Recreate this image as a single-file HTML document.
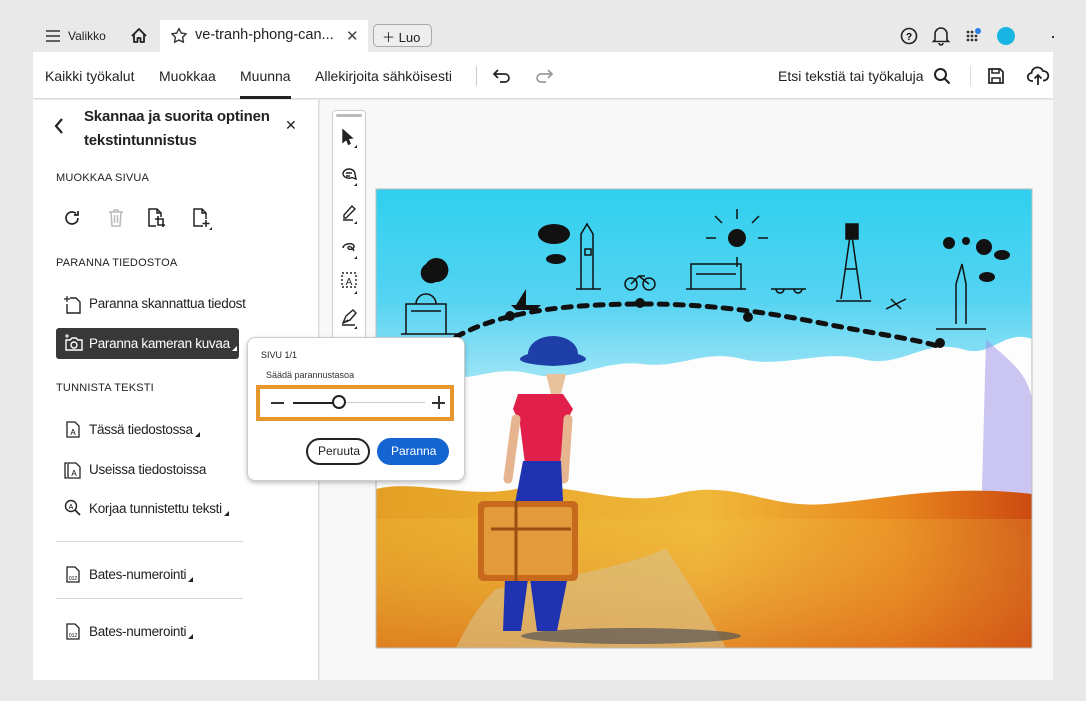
<!DOCTYPE html>
<html><head><meta charset="utf-8"><style>
*{box-sizing:border-box;margin:0;padding:0}
body{width:1086px;height:701px;background:#e9e9e9;font-family:"Liberation Sans",sans-serif;color:#222;position:relative;overflow:hidden}
.abs{position:absolute}
.tabbar{left:33px;top:20px;width:1020px;height:32px;background:#e9e9e9}
.tab{left:160px;top:20px;width:208px;height:32px;background:#fff}
.tool{left:33px;top:52px;width:1020px;height:47px;background:#fff;border-bottom:1px solid #ddd}
.t{position:absolute;font-size:14px;color:#222;white-space:nowrap}
.left{left:33px;top:100px;width:286px;height:580px;background:#fff;border-right:1px solid #ddd}
.canvas{left:320px;top:100px;width:733px;height:580px;background:#f8f8f8}
.sec{position:absolute;left:56px;font-size:11px;letter-spacing:.2px;color:#222}
.item{position:absolute;left:89px;font-size:13.5px;letter-spacing:-.3px;color:#222;white-space:nowrap}
.car{display:inline-block;width:0;height:0;border-left:5px solid transparent;border-bottom:5px solid #222;vertical-align:-3px;margin-left:2px}
svg{position:absolute;overflow:visible}
</style></head><body>
<div class="abs tabbar"></div>
<div class="abs tab"></div>
<svg style="left:45px;top:29px" width="16" height="14"><path d="M1 2h14M1 7h14M1 12h14" stroke="#333" stroke-width="1.6"/></svg>
<div class="t" style="left:68px;top:29px;font-size:12px">Valikko</div>
<svg style="left:130px;top:27px" width="18" height="17"><path d="M2 9L9 2l7 7M4 7.5V15h3.5v-4h3v4H14V7.5" fill="none" stroke="#222" stroke-width="1.8" stroke-linejoin="round"/></svg>
<svg style="left:170px;top:27px" width="18" height="17"><path d="M9 1.5l2.2 4.6 5 .7-3.6 3.5.9 5L9 13l-4.5 2.3.9-5L1.8 6.8l5-.7z" fill="none" stroke="#333" stroke-width="1.4" stroke-linejoin="round"/></svg>
<div class="t" style="left:195px;top:27px;font-size:14.5px">ve-tranh-phong-can...</div>
<div class="t" style="left:346px;top:27px;font-size:15px;color:#444">✕</div>
<div class="abs" style="left:373px;top:24px;width:59px;height:23px;border:1px solid #aaa;border-radius:5px;background:#eee"></div>
<div class="t" style="left:382px;top:27px;font-size:13px">＋ Luo</div>
<svg style="left:900px;top:27px" width="18" height="18"><circle cx="9" cy="9" r="7.5" fill="none" stroke="#222" stroke-width="1.6"/><text x="9" y="13" font-size="10" text-anchor="middle" font-weight="bold" font-family="Liberation Sans">?</text></svg>
<svg style="left:932px;top:26px" width="18" height="20"><path d="M3 14V8a6 6 0 0112 0v6l1.5 1.5h-15zM7 17a2 2 0 004 0" fill="none" stroke="#222" stroke-width="1.6"/></svg>
<svg style="left:966px;top:28px" width="18" height="16"><g fill="#333"><circle cx="2" cy="4" r="1.4"/><circle cx="6" cy="4" r="1.4"/><circle cx="2" cy="8" r="1.4"/><circle cx="6" cy="8" r="1.4"/><circle cx="10" cy="8" r="1.4"/><circle cx="2" cy="12" r="1.4"/><circle cx="6" cy="12" r="1.4"/><circle cx="10" cy="12" r="1.4"/></g><circle cx="12" cy="3" r="3" fill="#2a7de1"/></svg>
<div class="abs" style="left:997px;top:27px;width:18px;height:18px;border-radius:50%;background:#19b6e3"></div>
<div class="abs" style="left:1052px;top:36px;width:2px;height:2px;background:#333"></div>

<div class="abs tool"></div>
<div class="t" style="left:45px;top:68px">Kaikki työkalut</div>
<div class="t" style="left:159px;top:68px">Muokkaa</div>
<div class="t" style="left:240px;top:68px">Muunna</div>
<div class="abs" style="left:240px;top:96px;width:51px;height:3px;background:#222"></div>
<div class="t" style="left:315px;top:68px">Allekirjoita sähköisesti</div>
<div class="abs" style="left:476px;top:66px;width:1px;height:20px;background:#ccc"></div>
<svg style="left:492px;top:68px" width="20" height="16"><path d="M6 2L2 6l4 4M2 6h11a4 4 0 010 8H8" fill="none" stroke="#222" stroke-width="1.7"/></svg>
<svg style="left:534px;top:68px" width="20" height="16"><path d="M14 2l4 4-4 4M18 6H7a4 4 0 000 8h5" fill="none" stroke="#999" stroke-width="1.7"/></svg>
<div class="t" style="left:778px;top:68px">Etsi tekstiä tai työkaluja</div>
<svg style="left:933px;top:67px" width="18" height="18"><circle cx="7.5" cy="7.5" r="5.5" fill="none" stroke="#222" stroke-width="2"/><path d="M11.5 11.5l5 5" stroke="#222" stroke-width="2.2"/></svg>
<div class="abs" style="left:970px;top:66px;width:1px;height:20px;background:#ddd"></div>
<svg style="left:987px;top:67px" width="18" height="18"><path d="M2 2h11l3 3v11H2z" fill="none" stroke="#222" stroke-width="1.7"/><path d="M5 2v4h7V2M5 16v-5h8v5" fill="none" stroke="#222" stroke-width="1.5"/></svg>
<svg style="left:1027px;top:66px" width="22" height="20"><path d="M6 15H5a4 4 0 01-.5-8A6 6 0 0116 5a4.5 4.5 0 011 9.5h-1" fill="none" stroke="#222" stroke-width="1.8"/><path d="M11 19V9M7.5 12.5L11 9l3.5 3.5" fill="none" stroke="#222" stroke-width="1.8"/></svg>

<div class="abs left"></div>
<svg style="left:53px;top:117px" width="12" height="18"><path d="M9 2L3 9l6 7" fill="none" stroke="#222" stroke-width="2.2"/></svg>
<div class="t" style="left:84px;top:105px;font-size:15px;letter-spacing:-.2px;font-weight:bold;line-height:24px">Skannaa ja suorita optinen<br>tekstintunnistus</div>
<div class="t" style="left:285px;top:117px;font-size:14px">✕</div>
<div class="sec" style="top:172px">MUOKKAA SIVUA</div>
<svg style="left:63px;top:209px" width="18" height="18"><path d="M15 9a6 6 0 11-2-4.5M15 2v4h-4" fill="none" stroke="#222" stroke-width="1.7"/></svg>
<svg style="left:107px;top:208px" width="18" height="20"><path d="M2 4h14M7 4V2h4v2M4 4l1 14h8l1-14M7.5 7v8M10.5 7v8" fill="none" stroke="#bbb" stroke-width="1.5"/></svg>
<svg style="left:147px;top:207px" width="20" height="22"><path d="M9 19H2V2h8l4 4v4M10 2v4h4" fill="none" stroke="#222" stroke-width="1.5"/><path d="M11 9v9h7M8 12h8v8" fill="none" stroke="#222" stroke-width="1.6"/></svg>
<svg style="left:192px;top:207px" width="22" height="24"><path d="M11 19H2V2h8l4 4v6M10 2v4h4M14 13v7M10.5 16.5h7" fill="none" stroke="#222" stroke-width="1.5"/><path d="M20 20v3h-3z" fill="#222"/></svg>
<div class="sec" style="top:257px">PARANNA TIEDOSTOA</div>
<svg style="left:64px;top:295px" width="18" height="20"><path d="M6 3h6l4 4v11H3V9" fill="none" stroke="#222" stroke-width="1.4"/><path d="M3 1v6M0 4h6" stroke="#222" stroke-width="1.2"/></svg>
<div class="item" style="top:296px">Paranna skannattua tiedost</div>
<div class="abs" style="left:56px;top:328px;width:183px;height:31px;background:#383838;border-radius:3px"></div>
<svg style="left:64px;top:334px" width="20" height="18"><path d="M2 6h4l2-2h4l2 2h4v10H2z" fill="none" stroke="#fff" stroke-width="1.4"/><circle cx="10" cy="11" r="3" fill="none" stroke="#fff" stroke-width="1.4"/><path d="M3 0v4M1 2h4" stroke="#fff" stroke-width="1.1"/></svg>
<div class="item" style="top:336px;color:#fff">Paranna kameran kuvaa<span class="car" style="border-bottom-color:#fff"></span></div>
<div class="sec" style="top:382px">TUNNISTA TEKSTI</div>
<svg style="left:66px;top:421px" width="14" height="17"><path d="M1 1h8l4 4v11H1z" fill="none" stroke="#222" stroke-width="1.3"/><text x="7" y="14" font-size="8" text-anchor="middle" font-family="Liberation Sans">A</text></svg>
<div class="item" style="top:422px">Tässä tiedostossa<span class="car"></span></div>
<svg style="left:64px;top:461px" width="18" height="18"><path d="M3 2H1v15h2" fill="none" stroke="#222" stroke-width="1.3"/><path d="M4 2h8l4 4v11H4z" fill="none" stroke="#222" stroke-width="1.3"/><text x="10" y="15" font-size="8" text-anchor="middle" font-family="Liberation Sans">A</text></svg>
<div class="item" style="top:462px">Useissa tiedostoissa</div>
<svg style="left:64px;top:499px" width="18" height="18"><circle cx="7" cy="7" r="5.5" fill="none" stroke="#222" stroke-width="1.4"/><path d="M11 11l5 5" stroke="#222" stroke-width="1.6"/><text x="7" y="10" font-size="7" text-anchor="middle" font-family="Liberation Sans">A</text></svg>
<div class="item" style="top:501px">Korjaa tunnistettu teksti<span class="car"></span></div>
<div class="abs" style="left:56px;top:541px;width:187px;height:1px;background:#d5d5d5"></div>
<svg style="left:66px;top:566px" width="14" height="17"><path d="M1 1h8l4 4v11H1z" fill="none" stroke="#222" stroke-width="1.3"/><text x="7" y="14" font-size="5" text-anchor="middle" font-family="Liberation Sans">012</text></svg>
<div class="item" style="top:567px">Bates-numerointi<span class="car"></span></div>
<div class="abs" style="left:56px;top:598px;width:187px;height:1px;background:#d5d5d5"></div>
<svg style="left:66px;top:623px" width="14" height="17"><path d="M1 1h8l4 4v11H1z" fill="none" stroke="#222" stroke-width="1.3"/><text x="7" y="14" font-size="5" text-anchor="middle" font-family="Liberation Sans">012</text></svg>
<div class="item" style="top:624px">Bates-numerointi<span class="car"></span></div>

<div class="abs canvas"></div>
<div class="abs" style="left:332px;top:110px;width:34px;height:230px;background:#fff;border:1px solid #ccc;border-radius:4px"></div>
<div class="abs" style="left:336px;top:114px;width:26px;height:3px;background:#bbb;border-radius:2px"></div>
<svg style="left:340px;top:128px" width="20" height="210" fill="none" stroke="#222" stroke-width="1.4">
<path d="M3 2l9 8-4 .5 2 5-1.5.7-2-5L3 14z" fill="#222"/>
<path d="M3 46a6 5 0 1112 0l1 5-4-1.5A6 5 0 013 46zM6 45h6M6 48h4"/>
<path d="M4 87l8-9 3 3-9 9H4zM3 92h10" />
<path d="M3 120c0-5 12-6 11-1-1 3-6 3-6 1s3-3 6 3"/>
<path d="M2 145h14v14H2z" stroke-dasharray="2 2"/><text x="9" y="157" font-size="10" fill="#222" stroke="none" text-anchor="middle" font-family="Liberation Sans">A</text>
<path d="M3 195l3-7 7-6 3 3-6 7zM3 195l5-3M2 197h13"/>
<g fill="#222" stroke="none"><path d="M17 17v3h-3z"/><path d="M17 55v3h-3z"/><path d="M17 93v3h-3z"/><path d="M17 128v3h-3z"/><path d="M17 163v3h-3z"/><path d="M17 198v3h-3z"/></g>
</svg>

<svg style="left:376px;top:189px" width="656" height="459" viewBox="0 0 656 459">
<defs>
<linearGradient id="sky" x1="0" y1="0" x2="0" y2="1"><stop offset="0" stop-color="#2fd0ee"/><stop offset=".55" stop-color="#55d3f2"/><stop offset="1" stop-color="#a7e6f6"/></linearGradient>
<linearGradient id="fld" x1="0" y1="0" x2="1" y2="0"><stop offset="0" stop-color="#e4a025"/><stop offset=".5" stop-color="#f0b83a"/><stop offset=".8" stop-color="#e8861e"/><stop offset="1" stop-color="#cc4a10"/></linearGradient>
<linearGradient id="fv" x1="0" y1="0" x2="0" y2="1"><stop offset="0" stop-color="#f3c84a" stop-opacity=".2"/><stop offset="1" stop-color="#d8601a" stop-opacity=".5"/></linearGradient>
</defs>
<rect width="656" height="459" fill="#fdfdfd"/>
<path d="M0 0h656v150c-30-10-40 20-70 10-40-10-60 20-100 10s-80 10-120 0-60 10-100 5-70 20-110 10-60 10-80 0-50 20-76 15z" fill="url(#sky)"/>
<path d="M610 150c20 20 40 30 46 60v150c-20-10-40-20-50-60z" fill="#9a8ee6" opacity=".5"/>
<path d="M0 300c40-10 90 10 140 0s100 20 160 5 90 15 150 10 120-20 206-10v154H0z" fill="url(#fld)"/>
<path d="M0 330h656v129H0z" fill="url(#fv)"/>
<path d="M120 400c60-10 120-20 170-40 20 30 40 60 60 99H80c10-20 20-40 40-59z" fill="#d8c28a" opacity=".6"/>
<ellipse cx="255" cy="447" rx="110" ry="8" fill="#555" opacity=".7"/>
<g fill="none" stroke="#111" stroke-width="5" stroke-linecap="round" stroke-dasharray="8 8">
<path d="M80 148C130 120 200 115 270 115S400 125 450 135 540 150 565 158"/></g>
<g fill="#111"><circle cx="134" cy="127" r="5"/><circle cx="264" cy="114" r="5"/><circle cx="372" cy="128" r="5"/><circle cx="564" cy="154" r="5"/>
<ellipse cx="178" cy="45" rx="16" ry="10"/><ellipse cx="180" cy="70" rx="10" ry="5"/><circle cx="361" cy="49" r="9"/>
<path d="M50 75a12 12 0 1110 18 10 10 0 01-10-18z"/>
<circle cx="573" cy="54" r="6"/><circle cx="608" cy="58" r="8"/><circle cx="590" cy="52" r="4"/><ellipse cx="626" cy="66" rx="8" ry="5"/><ellipse cx="611" cy="88" rx="8" ry="5"/>
<path d="M135 116h30l-5 5h-20zM150 100v16h-10z"/></g>
<g fill="none" stroke="#111" stroke-width="1.5">
<path d="M30 145v-30h40v30M40 115a10 10 0 0120 0M25 145h60M35 122h30"/>
<path d="M205 100V45l6-10 6 10v55M200 100h25M209 60h6v6h-6z"/>
<circle cx="255" cy="95" r="6"/><circle cx="273" cy="95" r="6"/><path d="M255 95l8-8 10 8M263 87h6"/>
<path d="M315 100V75h50v25M320 85h40M310 100h60"/>
<path d="M361 30v-10M361 68v10M340 49h-10M382 49h10M346 34l-7-7M376 34l7-7"/>
<path d="M395 100h35M400 100a4 4 0 008 0M418 100a4 4 0 008 0"/>
<path d="M465 110l10-70 10 70M470 80h10M460 112h35"/>
<path d="M470 35h12v15h-12z" fill="#111"/>
<path d="M580 135v-40l6-20 4 20v40M560 140h50"/>
<path d="M510 120l20-10M515 110l10 10"/>
</g>
<path d="M152 165a25 18 0 1150 0c15 5 10 10-25 12-35-2-40-7-25-12z" fill="#1f3fa8"/>
<path d="M170 185h20l-5 20h-10z" fill="#e8c29a"/>
<path d="M142 205h45l10 15-8 15-5 40h-35l-5-40-7-15z" fill="#e01f4a"/>
<path d="M140 230l-8 60M192 230l-4 60" stroke="#e6b48f" stroke-width="9" stroke-linecap="round"/>
<path d="M147 272h38l6 120-10 50h-20l-8-60-8 60h-18l3-80z" fill="#1f33b0"/>
<rect x="102" y="312" width="100" height="80" rx="5" fill="#c86a1e"/>
<rect x="108" y="318" width="88" height="68" rx="3" fill="#e39a3a"/>
<path d="M140 312v80M115 340h80" stroke="#9a4e12" stroke-width="3"/>
<rect x="0" y="0" width="656" height="459" fill="none" stroke="#bbb"/>
</svg>

<div class="abs" style="left:247px;top:337px;width:218px;height:144px;background:#fff;border:1px solid #ccc;border-radius:8px;box-shadow:0 2px 5px rgba(0,0,0,.25)"></div>
<div class="t" style="left:261px;top:350px;font-size:9px">SIVU 1/1</div>
<div class="t" style="left:266px;top:370px;font-size:9px;color:#333">Säädä parannustasoa</div>
<div class="abs" style="left:256px;top:385px;width:198px;height:36px;border:4px solid #e8962e"></div>
<div class="abs" style="left:271px;top:402px;width:13px;height:1.5px;background:#333"></div>
<div class="abs" style="left:293px;top:402px;width:40px;height:2px;background:#222"></div>
<div class="abs" style="left:345px;top:402px;width:80px;height:1px;background:#ccc"></div>
<div class="abs" style="left:332px;top:395px;width:14px;height:14px;border:2px solid #222;border-radius:50%;background:#fff"></div>
<div class="abs" style="left:432px;top:402px;width:13px;height:1.5px;background:#333"></div>
<div class="abs" style="left:438px;top:396px;width:1.5px;height:13px;background:#333"></div>
<div class="abs" style="left:306px;top:438px;width:64px;height:27px;border:2px solid #222;border-radius:14px"></div>
<div class="t" style="left:318px;top:444px;font-size:12px">Peruuta</div>
<div class="abs" style="left:377px;top:438px;width:72px;height:27px;background:#1464d2;border-radius:14px"></div>
<div class="t" style="left:391px;top:444px;font-size:12px;color:#fff">Paranna</div>
</body></html>
